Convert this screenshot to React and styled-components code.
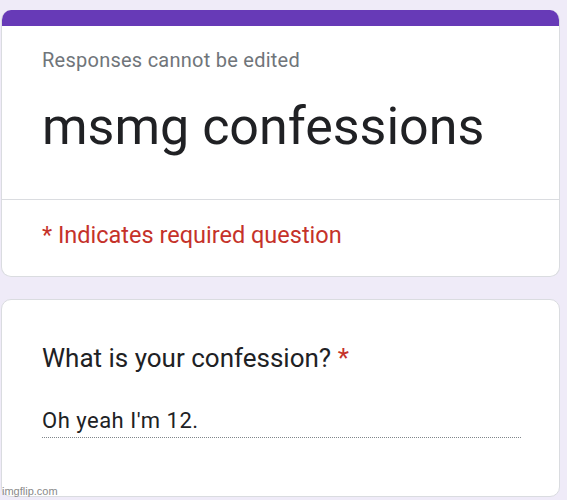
import React from "react";
import styled, { createGlobalStyle } from "styled-components";

const GlobalStyle = createGlobalStyle`
  html, body {
    margin: 0;
    padding: 0;
    background: #efebf8;
    font-family: Roboto, "Liberation Sans", sans-serif;
  }
`;

const Page = styled.div`
  position: relative;
  width: 567px;
  height: 500px;
  padding: 10px 7px 0 1px;
  box-sizing: border-box;
  display: flex;
  flex-direction: column;
  gap: 22px;
  overflow: hidden;
`;

const Card = styled.div`
  background: #fff;
  border: 1px solid #dadce0;
  border-radius: 10px;
  overflow: hidden;
  box-sizing: border-box;
  ${(p) => p.$accent && `border-top: none;`}
`;

const AccentBar = styled.div`
  height: 16px;
  background: #673ab7;
`;

const Section = styled.div`
  padding: ${(p) => p.$pad};
  border-top: ${(p) => (p.$divider ? "1px solid #dadce0" : "none")};
`;

const Note = styled.div`
  font-size: 20px;
  letter-spacing: 0.25px;
  color: #70757a;
  line-height: 24px;
`;

const Title = styled.h1`
  margin: 25px 0 0;
  font-size: 52px;
  font-weight: 400;
  color: #202124;
  line-height: 60px;
`;

const Required = styled.div`
  font-size: 23.5px;
  color: #c5322a;
  line-height: 30px;
`;

const Question = styled.div`
  font-size: 26px;
  color: #202124;
  line-height: 32px;

  span {
    color: #c5322a;
  }
`;

const Answer = styled.div`
  width: 479px;
  margin-top: 33px;
  font-size: 22px;
  letter-spacing: 0.5px;
  color: #202124;
  line-height: 28px;
  padding-bottom: 2px;
  border-bottom: 1px dotted #80868b;
`;

const Watermark = styled.div`
  position: absolute;
  left: 2px;
  bottom: 3px;
  font-family: "Liberation Sans", Arial, sans-serif;
  font-size: 11px;
  color: #8a8a8a;
`;

export default function App() {
  return (
    <>
      <GlobalStyle />
      <Page>
        <Card $accent>
          <AccentBar />
          <Section $pad="22px 40px 42px">
            <Note>Responses cannot be edited</Note>
            <Title>msmg confessions</Title>
          </Section>
          <Section $divider $pad="20px 40px 26px">
            <Required>* Indicates required question</Required>
          </Section>
        </Card>
        <Card>
          <Section $pad="42px 40px 58px">
            <Question>
              What is your confession? <span>*</span>
            </Question>
            <Answer>Oh yeah I'm 12.</Answer>
          </Section>
        </Card>
        <Watermark>imgflip.com</Watermark>
      </Page>
    </>
  );
}
